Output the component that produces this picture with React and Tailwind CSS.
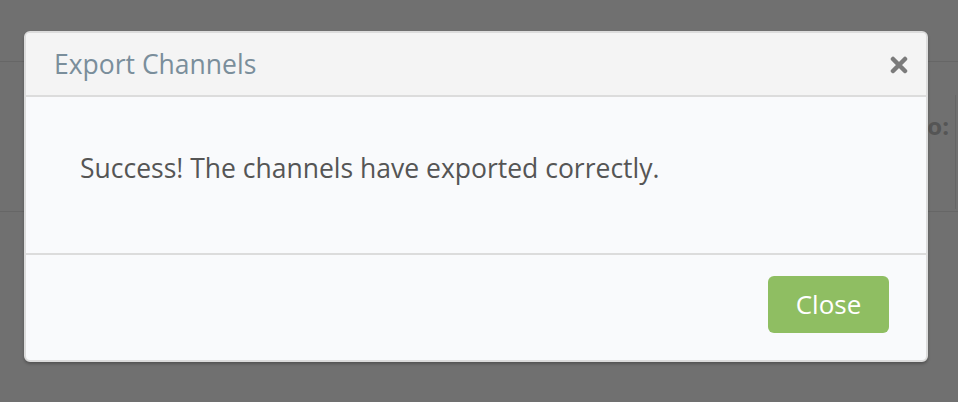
import React from 'react';

export default function App() {
  return (
    <div className="relative w-[958px] h-[402px] overflow-hidden bg-[#707070] font-['Open_Sans',sans-serif]">
      {/* page behind the overlay */}
      <div className="h-[62px] border-b border-[#666666]"></div>
      <div className="flex h-[150px] justify-end border-b border-[#666666]">
        <div className="flex items-start pt-[52px] text-[24px] font-bold text-[#555555] leading-none">o:</div>
        <div className="ml-[6px] mt-[33px] mb-[2px] w-[3px] border-l border-[#666666]"></div>
      </div>

      {/* modal */}
      <div className="absolute left-[24px] top-[31px] w-[904px] rounded-[6px] border-2 border-[#dcdcdc] bg-[#f9fafc] shadow-[0_2px_3px_rgba(0,0,0,0.25)] overflow-hidden">
        <div className="flex h-[64px] items-center justify-between border-b-2 border-[#dcdcdc] bg-[#f4f4f4] pl-[28px] pr-[18px]">
          <h3 className="text-[26.5px] text-[#7a8e9b] leading-none">Export Channels</h3>
          <button className="mt-[2px] text-[#7b7b7b]">
            <svg width="18" height="18" viewBox="0 0 18 18">
              <path d="M3 3 L15 15 M15 3 L3 15" stroke="currentColor" strokeWidth="4.5" strokeLinecap="round" />
            </svg>
          </button>
        </div>
        <div className="flex h-[158px] items-center border-b-2 border-[#dcdcdc] px-[54px] pb-[12px]">
          <p className="text-[26.5px] text-[#555555]">Success! The channels have exported correctly.</p>
        </div>
        <div className="flex h-[105px] items-center justify-end pr-[37px] pb-[7px]">
          <button className="h-[57px] w-[121px] rounded-[6px] bg-[#8fbe62] text-[26px] text-white">Close</button>
        </div>
      </div>
    </div>
  );
}
